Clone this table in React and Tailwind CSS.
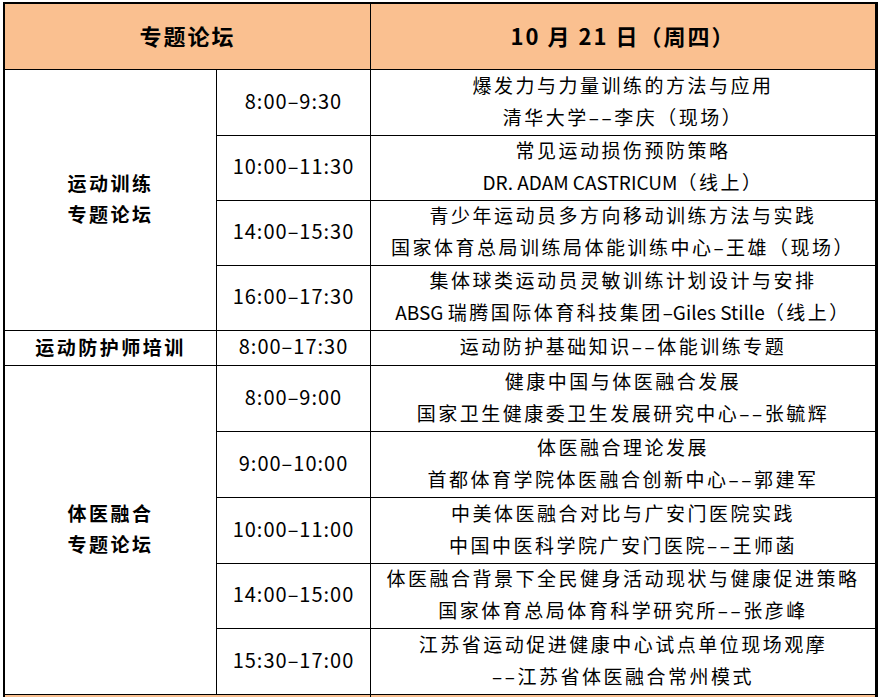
import React from 'react'

const cjk = { fontFamily: '"Noto Sans CJK SC", "Noto Sans", sans-serif' }

function L({ children }) {
  return <span className="tracking-normal">{children}</span>
}

function Time({ children }) {
  return (
    <div className="flex items-center justify-center pb-[4px] border-r border-b border-black text-[20px] tracking-[1px] text-black">
      {children}
    </div>
  )
}

function Topic({ children }) {
  return (
    <div className="flex flex-col items-center justify-center pb-[4px] border-b border-black text-[19px] leading-[32px] tracking-[2.5px] text-black whitespace-nowrap">
      {children}
    </div>
  )
}

function Label({ children, className = '' }) {
  return (
    <div className={`flex flex-col items-center justify-center pb-[4px] border-r border-b border-black text-[19px] leading-[31px] font-bold tracking-[2.5px] text-black ${className}`}>
      {children}
    </div>
  )
}

function App() {
  return (
    <div className="bg-white w-[880px] h-[697px] overflow-hidden pt-[2px] pl-[3px]" style={cjk}>
      <div className="w-[875px] grid grid-cols-[212px_154px_504px] grid-rows-[66px_66px_65px_65px_65px_35px_66px_66px_66px_65px_66px_40px] border-l-2 border-t-2 border-r-[3px] border-black">
        {/* header */}
        <div className="col-span-2 flex items-center justify-center pb-[2px] bg-[#fac090] border-r border-b border-black text-[22px] font-bold tracking-[2px]">
          专题论坛
        </div>
        <div className="flex items-center justify-center pb-[2px] bg-[#fac090] border-b border-black text-[22px] font-bold tracking-[2px]">
          10 月 21 日（周四）
        </div>

        {/* 运动训练 */}
        <Label className="row-span-4">
          <div>运动训练</div>
          <div>专题论坛</div>
        </Label>
        <Time>8:00–9:30</Time>
        <Topic>
          <div>爆发力与力量训练的方法与应用</div>
          <div>清华大学––李庆（现场）</div>
        </Topic>
        <Time>10:00–11:30</Time>
        <Topic>
          <div>常见运动损伤预防策略</div>
          <div><L>DR. ADAM CASTRICUM</L>（线上）</div>
        </Topic>
        <Time>14:00–15:30</Time>
        <Topic>
          <div>青少年运动员多方向移动训练方法与实践</div>
          <div>国家体育总局训练局体能训练中心–王雄（现场）</div>
        </Topic>
        <Time>16:00–17:30</Time>
        <Topic>
          <div>集体球类运动员灵敏训练计划设计与安排</div>
          <div><L>ABSG </L>瑞腾国际体育科技集团<L>–Giles Stille</L>（线上）</div>
        </Topic>

        {/* 运动防护师培训 */}
        <Label>运动防护师培训</Label>
        <Time>8:00–17:30</Time>
        <Topic>
          <div>运动防护基础知识––体能训练专题</div>
        </Topic>

        {/* 体医融合 */}
        <Label className="row-span-5">
          <div>体医融合</div>
          <div>专题论坛</div>
        </Label>
        <Time>8:00–9:00</Time>
        <Topic>
          <div>健康中国与体医融合发展</div>
          <div>国家卫生健康委卫生发展研究中心––张毓辉</div>
        </Topic>
        <Time>9:00–10:00</Time>
        <Topic>
          <div>体医融合理论发展</div>
          <div>首都体育学院体医融合创新中心––郭建军</div>
        </Topic>
        <Time>10:00–11:00</Time>
        <Topic>
          <div>中美体医融合对比与广安门医院实践</div>
          <div>中国中医科学院广安门医院––王师菡</div>
        </Topic>
        <Time>14:00–15:00</Time>
        <Topic>
          <div>体医融合背景下全民健身活动现状与健康促进策略</div>
          <div>国家体育总局体育科学研究所––张彦峰</div>
        </Topic>
        <Time>15:30–17:00</Time>
        <Topic>
          <div>江苏省运动促进健康中心试点单位现场观摩</div>
          <div>––江苏省体医融合常州模式</div>
        </Topic>

        {/* next day header, cut off */}
        <div className="col-span-2 bg-[#fac090] border-r border-black"></div>
        <div className="bg-[#fac090]"></div>
      </div>
    </div>
  )
}

export default App
